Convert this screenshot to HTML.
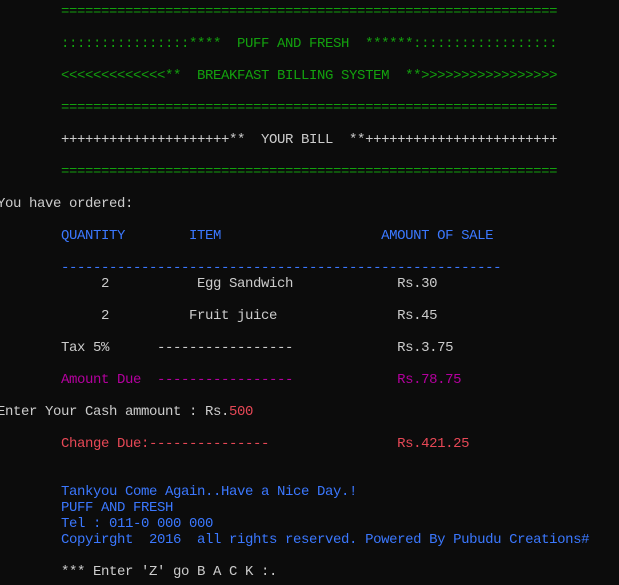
<!DOCTYPE html>
<html><head><meta charset="utf-8"><style>
html,body{margin:0;padding:0;background:#0c0c0c;width:619px;height:585px;overflow:hidden}
pre{position:absolute;left:-3px;top:4px;margin:0;font-family:"Liberation Mono",monospace;font-size:14px;letter-spacing:-0.4px;line-height:16px;color:#cccccc;white-space:pre}
.g{color:#13a10e}.b{color:#3b78ff}.m{color:#b4009e}.r{color:#e74856}
</style></head><body><pre><span class="g">        ==============================================================

        ::::::::::::::::****  PUFF AND FRESH  ******::::::::::::::::::

        &lt;&lt;&lt;&lt;&lt;&lt;&lt;&lt;&lt;&lt;&lt;&lt;&lt;**  BREAKFAST BILLING SYSTEM  **&gt;&gt;&gt;&gt;&gt;&gt;&gt;&gt;&gt;&gt;&gt;&gt;&gt;&gt;&gt;&gt;&gt;

        ==============================================================
</span>
        +++++++++++++++++++++**  YOUR BILL  **++++++++++++++++++++++++
<span class="g">
        ==============================================================
</span>
You have ordered:

<span class="b">        QUANTITY        ITEM                    AMOUNT OF SALE

        -------------------------------------------------------</span>
             2           Egg Sandwich             Rs.30

             2          Fruit juice               Rs.45

        Tax 5%      -----------------             Rs.3.75

<span class="m">        Amount Due  -----------------             Rs.78.75</span>

Enter Your Cash ammount : Rs.<span class="r">500</span>

<span class="r">        Change Due:---------------                Rs.421.25</span>


<span class="b">        Tankyou Come Again..Have a Nice Day.!
        PUFF AND FRESH
        Tel : 011-0 000 000
        Copyirght  2016  all rights reserved. Powered By Pubudu Creations#</span>

        *** Enter 'Z' go B A C K :.</pre></body></html>
